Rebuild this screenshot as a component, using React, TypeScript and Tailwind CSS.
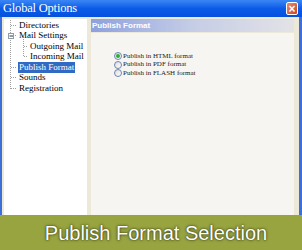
const treeItems = [
  { label: "Directories", indent: 18 },
  { label: "Mail Settings", indent: 18 },
  { label: "Outgoing Mail", indent: 29 },
  { label: "Incoming Mail", indent: 29 },
  { label: "Publish Format", indent: 18, selected: true },
  { label: "Sounds", indent: 18 },
  { label: "Registration", indent: 18 },
];

const formats = ["HTML", "PDF", "FLASH"];

function TreeLines() {
  // dotted connectors of the tree view, page coords shifted by the panel offset (x 4, y 19)
  const c = "#a0a0a0";
  return (
    <svg className="absolute left-0 top-0" width="83" height="100">
      <g stroke={c} strokeWidth="1" strokeDasharray="1 1" shapeRendering="crispEdges">
        <line x1="6.5" y1="1" x2="6.5" y2="70" />
        <line x1="6.5" y1="6.5" x2="13" y2="6.5" />
        <line x1="9" y1="16.5" x2="13" y2="16.5" />
        <line x1="6.5" y1="48.5" x2="13" y2="48.5" />
        <line x1="6.5" y1="58.5" x2="13" y2="58.5" />
        <line x1="6.5" y1="69.5" x2="13" y2="69.5" />
        <line x1="19.5" y1="18" x2="19.5" y2="38" />
        <line x1="19.5" y1="27.5" x2="24" y2="27.5" />
        <line x1="19.5" y1="37.5" x2="24" y2="37.5" />
      </g>
      <rect x="4.5" y="14.5" width="5" height="5" fill="#fff" stroke="#8c9db8" />
      <line x1="5.5" y1="17" x2="9" y2="17" stroke="#333" />
    </svg>
  );
}

function Radio({ checked }: { checked?: boolean }) {
  return (
    <span className="w-[8px] h-[8px] rounded-full border border-[#6d86b5] bg-gradient-to-br from-[#dcdcd6] to-white flex items-center justify-center">
      {checked && <span className="w-[4px] h-[4px] rounded-full bg-[#2fae2f]" />}
    </span>
  );
}

export default function App() {
  return (
    <div className="relative w-[302px] h-[250px] overflow-hidden bg-[#ece9d8] font-['Liberation_Serif',serif]">
      <div className="h-[17px] bg-gradient-to-b from-[#3b86f5] via-[#0b5be9] to-[#0550dc] flex items-center justify-between pl-[3px] pr-[4px]">
        <span className="text-white text-[12.5px] leading-none tracking-[-0.2px]">Global Options</span>
        <span className="w-[12px] h-[13px] rounded-[2px] border border-white bg-gradient-to-br from-[#e98a6c] to-[#c94520] flex items-center justify-center text-white text-[12px] font-bold font-['Liberation_Sans',sans-serif] leading-none">
          ×
        </span>
      </div>

      <div className="flex h-[233px] border-l-2 border-r-[3px] border-[#3c6fd9] pl-[2px] pt-[2px]">
        <div className="relative w-[83px] bg-white pt-[1px]">
          <TreeLines />
          {treeItems.map((item) => (
            <div key={item.label} className="relative h-[10.5px] flex items-center" style={{ paddingLeft: item.indent - 4 }}>
              <span
                className={`text-[9px] leading-none px-[1px] py-[1px] whitespace-nowrap ${
                  item.selected ? "bg-[#316ac5] text-white" : "text-black"
                }`}
              >
                {item.label}
              </span>
            </div>
          ))}
        </div>

        <div className="ml-[4px] w-[203px] flex flex-col">
          <div className="h-[13px] bg-gradient-to-r from-[#8ea1de] via-[#c5cde6] to-[#e3e3e6] flex items-center pl-[1px]">
            <span className="text-white text-[8px] font-bold font-['Liberation_Sans',sans-serif] leading-none">Publish Format</span>
          </div>
          <div className="flex-1 mt-[1px] bg-[#f6f5f1] pt-[19px] pl-[23px] flex flex-col gap-[0.5px]">
            {formats.map((f, i) => (
              <div key={f} className="flex items-center gap-[1px] h-[8px]">
                <Radio checked={i === 0} />
                <span className="text-[7px] leading-none text-[#222]">Publish in {f} format</span>
              </div>
            ))}
          </div>
        </div>
      </div>

      <div className="absolute left-0 bottom-0 w-full h-[35px] bg-[#98a440] flex items-center justify-center pl-[10px]">
        <span className="text-white text-[20px] leading-none font-['Liberation_Sans',sans-serif] [text-shadow:0_0_3px_rgba(45,50,10,0.95),0_0_1px_rgba(45,50,10,0.9)]">
          Publish Format Selection
        </span>
      </div>
    </div>
  );
}
